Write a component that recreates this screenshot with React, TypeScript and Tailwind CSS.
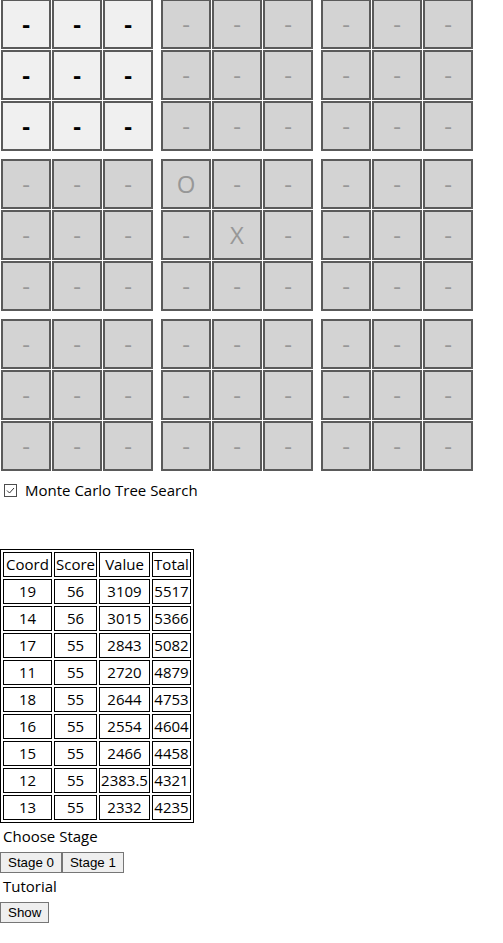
import React from 'react';

type Mark = '-' | 'O' | 'X';

const empty = (): Mark[] => Array(9).fill('-');

// board index 4 (the centre one) has an O top-left and an X in the middle
const boards: Mark[][] = Array.from({ length: 9 }, (_, i) => {
    const b = empty();
    if (i === 4) {
        b[0] = 'O';
        b[4] = 'X';
    }
    return b;
});

const rows = [
    ['19', '56', '3109', '5517'],
    ['14', '56', '3015', '5366'],
    ['17', '55', '2843', '5082'],
    ['11', '55', '2720', '4879'],
    ['18', '55', '2644', '4753'],
    ['16', '55', '2554', '4604'],
    ['15', '55', '2466', '4458'],
    ['12', '55', '2383.5', '4321'],
    ['13', '55', '2332', '4235'],
];

const colWidths = ['w-[49px]', 'w-[43px]', 'w-[51px]', 'w-[39px]'];

function Board({ cells, active }: { cells: Mark[]; active: boolean }) {
    return (
        <div className="grid grid-cols-3 gap-px">
            {cells.map((c, i) => (
                <button
                    key={i}
                    disabled={!active}
                    className={
                        active
                            ? 'flex h-[50px] w-[50px] items-center justify-center border-2 border-[#5a5a5a] bg-[#f0f0f0] text-[24px] font-bold text-black'
                            : 'flex h-[50px] w-[50px] items-center justify-center border-2 border-[#5a5a5a] bg-[#d3d3d3] text-[24px] text-[#979797]'
                    }
                >
                    {c}
                </button>
            ))}
        </div>
    );
}

function NativeButton({ children }: { children: React.ReactNode }) {
    return (
        <button className="h-[21px] border border-[#767676] bg-[#efefef] px-[7px] font-['Liberation_Sans',Arial,sans-serif] text-[13.33px] leading-[15px] text-black">
            {children}
        </button>
    );
}

export default function App() {
    const [mcts, setMcts] = React.useState(true);

    return (
        <div className="font-['Open_Sans','Noto_Sans',sans-serif] text-[15px] text-black">
            {/* Boards */}
            <div className="-mt-px ml-px grid w-max grid-cols-3 gap-2">
                {boards.map((b, i) => (
                    <Board key={i} cells={b} active={i === 0} />
                ))}
            </div>

            {/* Toggle */}
            <label className="mt-[9px] flex h-[21px] cursor-default items-center">
                <input type="checkbox" checked={mcts} onChange={() => setMcts(!mcts)} className="sr-only" />
                <span className="ml-[4px] mr-[8px] flex h-[13px] w-[13px] items-center justify-center border border-[#4d4d4d] bg-white">
                    {mcts && (
                        <svg viewBox="0 0 11 11" className="h-[11px] w-[11px]" fill="none" stroke="#333" strokeWidth="1">
                            <path d="M2 5.5 L4.5 8 L9 3" />
                        </svg>
                    )}
                </span>
                <span className="leading-[21px]">Monte Carlo Tree Search</span>
            </label>

            <div className="h-[48px]" />

            {/* Search results */}
            <table className="border-separate border-spacing-[2px] border border-black">
                <thead>
                    <tr>
                        {['Coord', 'Score', 'Value', 'Total'].map((h, i) => (
                            <th key={h} className={`h-[25px] border border-black p-px text-center font-normal leading-[21px] ${colWidths[i]}`}>
                                {h}
                            </th>
                        ))}
                    </tr>
                </thead>
                <tbody>
                    {rows.map((r) => (
                        <tr key={r[0]}>
                            {r.map((v, i) => (
                                <td key={i} className={`h-[25px] border border-black p-px text-center leading-[21px] ${colWidths[i]}`}>
                                    {v}
                                </td>
                            ))}
                        </tr>
                    ))}
                </tbody>
            </table>

            {/* Stage */}
            <div className="flex h-[26px] items-center pl-[3px]">Choose Stage</div>
            <div className="flex pt-[3px]">
                <NativeButton>Stage 0</NativeButton>
                <NativeButton>Stage 1</NativeButton>
            </div>

            <div className="flex h-[27px] items-center pl-[3px]">Tutorial</div>
            <div className="flex pt-[2px]">
                <NativeButton>Show</NativeButton>
            </div>
        </div>
    );
}
